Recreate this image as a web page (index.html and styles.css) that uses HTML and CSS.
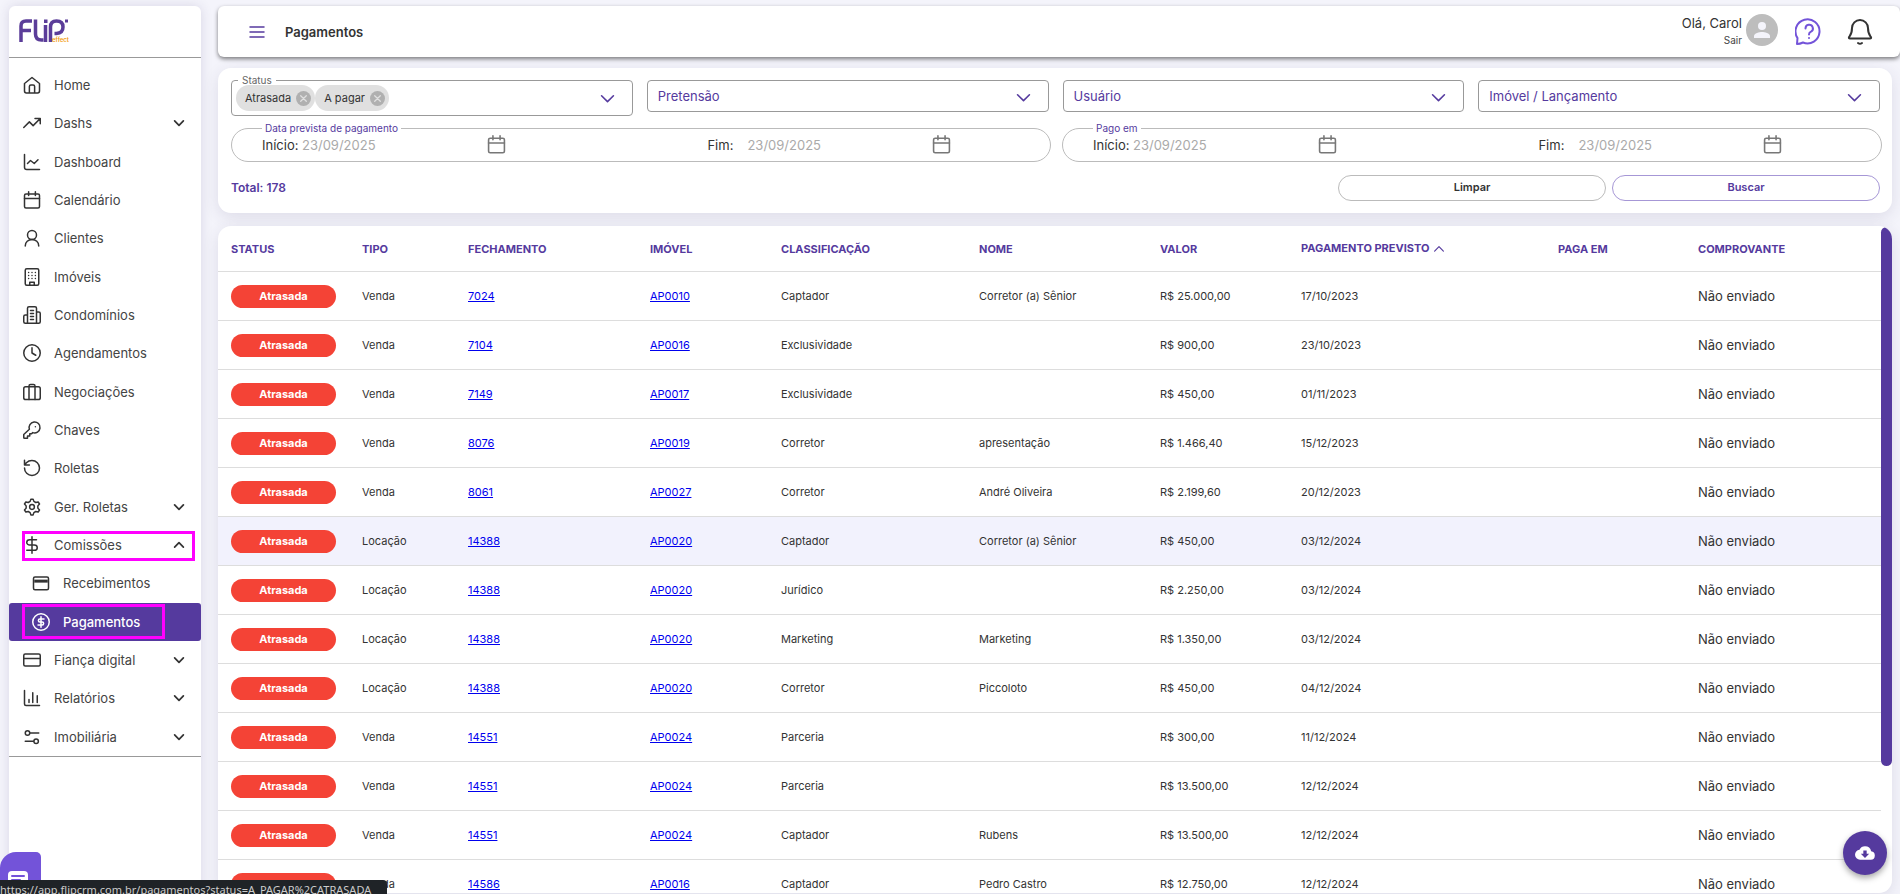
FILE: index.html
```html
<!DOCTYPE html>
<html lang="pt-BR">
<head>
    <meta charset="UTF-8">
    <meta name="viewport" content="width=device-width, initial-scale=1.0">
    <title>Pagamentos</title>
    <link rel="stylesheet" href="styles.css">
</head>
<body>

    <!-- Shared icons -->
    <svg class="sprite" aria-hidden="true">
        <symbol id="down" viewBox="0 0 24 24"><path d="M4.500 8.500l7.500 7.500 7.500-7.500"/></symbol>
        <symbol id="cal" viewBox="0 0 24 24"><rect x="2" y="4" width="20" height="18.500" rx="2"/><path d="M2 10h20M7.500 1v5M16.500 1v5"/></symbol>
        <symbol id="chipx" viewBox="0 0 24 24"><circle class="chip-disc" cx="12" cy="12" r="12"/><path d="M7.500 7.500l9 9M16.500 7.500l-9 9"/></symbol>
    </svg>

    <div class="app">

        <!-- Sidebar -->
        <aside class="sidebar">
            <a href="#" class="logo" aria-label="Flip effect">
                <svg width="50" height="26" viewBox="0 0 50 26">
                    <g fill="none" stroke="#5b3d99" stroke-width="3.500">
                        <path d="M2 24V8q0-5 5-5h6M2 12.500h10"/>
                        <path d="M16.500 1.500V16q0 6 6 6h2"/>
                        <path d="M26.500 7v17"/>
                        <path d="M31.500 24V9q0-6 6-6 6.500 0 6.500 6t-6.500 6.500h-2"/>
                    </g>
                    <path d="M25 1.500h3.500v3.500H25zM46 1.500h3v3h-3z" fill="#5b3d99"/>
                    <text x="33" y="24" class="logo-sub">effect</text>
                </svg>
            </a>
            <nav>
                <ul class="menu">
                    <li><a href="#"><svg class="ico" viewBox="0 0 24 24"><path d="M2 10l10-8 10 8v10a2.500 2.500 0 0 1-2.500 2.500h-15A2.500 2.500 0 0 1 2 20zM8.500 22v-8a2 2 0 0 1 2-2h3a2 2 0 0 1 2 2v8"/></svg>Home</a></li>
                    <li><a href="#"><svg class="ico" viewBox="0 0 24 24"><path d="M1 18l7.500-7.500 5 5L23 6M16 6h7v7"/></svg>Dashs<svg class="arrow"><use href="#down"/></svg></a></li>
                    <li><a href="#"><svg class="ico" viewBox="0 0 24 24"><path d="M2 2v17a3 3 0 0 0 3 3h17M6 14l4-4 5 4 5-5"/></svg>Dashboard</a></li>
                    <li><a href="#"><svg class="ico"><use href="#cal"/></svg>Calendário</a></li>
                    <li><a href="#"><svg class="ico" viewBox="0 0 24 24"><circle cx="12" cy="8" r="6"/><path d="M3 22.500c0-5 4-8.500 9-8.500s9 3.500 9 8.500"/></svg>Clientes</a></li>
                    <li><a href="#"><svg class="ico" viewBox="0 0 24 24"><rect x="3" y="1" width="18" height="22" rx="2"/><path d="M9 23v-4h6v4M7.500 6h.010M12 6h.010M16.500 6h.010M7.500 10h.010M12 10h.010M16.500 10h.010M7.500 14h.010M12 14h.010M16.500 14h.010"/></svg>Imóveis</a></li>
                    <li><a href="#"><svg class="ico" viewBox="0 0 24 24"><path d="M6 23V3a2 2 0 0 1 2-2h8a2 2 0 0 1 2 2v20zM6 12H3a2 2 0 0 0-2 2v7a2 2 0 0 0 2 2h3M18 8h3a2 2 0 0 1 2 2v11a2 2 0 0 1-2 2h-3M10 6h4M10 10h4M10 14h4M10 18h4"/></svg>Condomínios</a></li>
                    <li><a href="#"><svg class="ico" viewBox="0 0 24 24"><circle cx="12" cy="12" r="11"/><path d="M12 5v7l5 3"/></svg>Agendamentos</a></li>
                    <li><a href="#"><svg class="ico" viewBox="0 0 24 24"><rect x="1" y="5" width="22" height="17" rx="2.500"/><path d="M8 22V4a2 2 0 0 1 2-2h4a2 2 0 0 1 2 2v18"/></svg>Negociações</a></li>
                    <li><a href="#"><svg class="ico" viewBox="0 0 24 24"><path d="M1 18v4a1 1 0 0 0 1 1h4v-3h3v-3h2.500l1.500-1.500a7.300 7.300 0 1 0-4.500-4.500z"/><path d="M16.500 7.500h.010"/></svg>Chaves</a></li>
                    <li><a href="#"><svg class="ico" viewBox="0 0 24 24"><path d="M2 12a10 10 0 1 0 10-10 10.500 10.500 0 0 0-7.500 3L2 8M2 1.500V8h6.500"/></svg>Roletas</a></li>
                    <li><a href="#"><svg class="ico" viewBox="0 0 24 24"><path d="M9.500 4.500L10.500 1.500h3l1 3 2.500 1.500 3.200-.7 1.800 2.700-2.200 2.500v3l2.200 2.500-1.800 2.700-3.200-.7-2.500 1.500-1 3h-3l-1-3L7 18l-3.200.7L2 16l2.200-2.500v-3L2 8l1.800-2.700L7 6z"/><circle cx="12" cy="12" r="3.200"/></svg>Ger. Roletas<svg class="arrow"><use href="#down"/></svg></a></li>
                    <li class="marked"><a href="#"><svg class="ico" viewBox="0 0 24 24"><path d="M12 1v22M18 5H9a4 3.500 0 0 0 0 7h6a4 3.500 0 0 1 0 7H5"/></svg>Comissões<svg class="arrow up"><use href="#down"/></svg></a></li>
                    <li class="sub"><a href="#"><svg class="ico" viewBox="0 0 24 24"><rect x="2" y="4" width="20" height="17" rx="2"/><path d="M3 9.500h18" stroke-width="4" stroke-linecap="butt"/></svg>Recebimentos</a></li>
                    <li class="sub active marked"><a href="#" aria-current="page"><svg class="ico" viewBox="0 0 24 24"><circle cx="12" cy="12" r="11"/><path d="M12 5v14M16 8h-5.500a2 2 0 0 0 0 4h3a2 2 0 0 1 0 4H8"/></svg>Pagamentos</a></li>
                    <li><a href="#"><svg class="ico" viewBox="0 0 24 24"><rect x="1" y="4" width="22" height="16" rx="2"/><path d="M1 10h22"/></svg>Fiança digital<svg class="arrow"><use href="#down"/></svg></a></li>
                    <li><a href="#"><svg class="ico" viewBox="0 0 24 24"><path d="M2 2v18a2 2 0 0 0 2 2h18M8 18v-4M13 18V5M19 18V9"/></svg>Relatórios<svg class="arrow"><use href="#down"/></svg></a></li>
                    <li><a href="#"><svg class="ico" viewBox="0 0 24 24"><circle cx="6" cy="6.500" r="3"/><path d="M9 6.500h12M3 17.500h11"/><circle cx="17.500" cy="17.500" r="3"/></svg>Imobiliária<svg class="arrow"><use href="#down"/></svg></a></li>
                </ul>
            </nav>
        </aside>

        <div class="page">

            <!-- Top bar -->
            <header class="topbar">
                <button class="icon-btn burger" aria-label="Menu">
                    <svg width="16" height="12" viewBox="0 0 16 12"><path d="M1 1h14M1 6h14M1 11h14"/></svg>
                </button>
                <h1>Pagamentos</h1>
                <div class="user">
                    <span>Olá, Carol</span>
                    <a href="#">Sair</a>
                </div>
                <svg class="avatar" viewBox="0 0 32 32"><circle cx="16" cy="16" r="16" fill="#bdbdbd"/><circle cx="16" cy="12" r="4" fill="#f4f4fb"/><path d="M8 24v-2c0-2.700 5.300-4 8-4s8 1.300 8 4v2z" fill="#f4f4fb"/></svg>
                <button class="icon-btn help" aria-label="Ajuda">
                    <svg width="28" height="28" viewBox="0 0 28 28"><path d="M2 26l.500-6A12 12 0 1 1 8 24.500Q5 26 2 26z"/><path d="M10.500 10.500a3.700 3.700 0 1 1 5.500 3.200q-2 1-2 2.800M14 20h.010"/></svg>
                </button>
                <button class="icon-btn bell" aria-label="Notificações">
                    <svg width="28" height="28" viewBox="0 0 28 28"><path d="M6 10a8 8 0 0 1 16 0c0 6 1.500 7 3 9q.500 1.500-1 1.500H4q-1.500 0-1-1.500c1.500-2 3-3 3-9zM12 25q2 1.500 4 0"/></svg>
                </button>
            </header>

            <!-- Filters -->
            <form class="card filters">
                <div class="selects">
                    <fieldset class="multi">
                        <legend>Status</legend>
                        <span class="chip">Atrasada<button type="button" aria-label="Remover Atrasada"><svg><use href="#chipx"/></svg></button></span>
                        <span class="chip">A pagar<button type="button" aria-label="Remover A pagar"><svg><use href="#chipx"/></svg></button></span>
                        <button type="button" class="open" aria-label="Abrir status"><svg><use href="#down"/></svg></button>
                    </fieldset>
                    <div class="select">
                        <select aria-label="Pretensão"><option>Pretensão</option></select>
                        <svg><use href="#down"/></svg>
                    </div>
                    <div class="select">
                        <select aria-label="Usuário"><option>Usuário</option></select>
                        <svg><use href="#down"/></svg>
                    </div>
                    <div class="select">
                        <select aria-label="Imóvel / Lançamento"><option>Imóvel / Lançamento</option></select>
                        <svg><use href="#down"/></svg>
                    </div>
                </div>

                <div class="dates">
                    <fieldset class="range">
                        <legend>Data prevista de pagamento</legend>
                        <div class="date"><label for="prevInicio">Início:</label><input type="text" id="prevInicio" placeholder="23/09/2025"><svg><use href="#cal"/></svg></div>
                        <div class="date"><label for="prevFim">Fim:</label><input type="text" id="prevFim" placeholder="23/09/2025"><svg><use href="#cal"/></svg></div>
                    </fieldset>
                    <fieldset class="range">
                        <legend>Pago em</legend>
                        <div class="date"><label for="pagoInicio">Início:</label><input type="text" id="pagoInicio" placeholder="23/09/2025"><svg><use href="#cal"/></svg></div>
                        <div class="date"><label for="pagoFim">Fim:</label><input type="text" id="pagoFim" placeholder="23/09/2025"><svg><use href="#cal"/></svg></div>
                    </fieldset>
                </div>

                <div class="actions">
                    <strong>Total: 178</strong>
                    <button type="reset">Limpar</button>
                    <button type="button" class="primary">Buscar</button>
                </div>
            </form>

            <!-- Payments table -->
            <section class="card list">
                <div class="table-wrap">
                    <table>
                        <colgroup>
                            <col class="c-status"><col class="c-tipo"><col class="c-fech"><col class="c-imovel"><col class="c-class">
                            <col class="c-nome"><col class="c-valor"><col class="c-prev"><col class="c-paga"><col class="c-comp">
                        </colgroup>
                        <thead>
                            <tr><th>STATUS</th><th>TIPO</th><th>FECHAMENTO</th><th>IMÓVEL</th><th>CLASSIFICAÇÃO</th><th>NOME</th><th>VALOR</th><th>PAGAMENTO PREVISTO <svg><use href="#down"/></svg></th><th>PAGA EM</th><th>COMPROVANTE</th></tr>
                        </thead>
                        <tbody>
                            <tr><td><span class="badge">Atrasada</span></td><td>Venda</td><td><a href="#">7024</a></td><td><a href="#">AP0010</a></td><td>Captador</td><td>Corretor (a) Sênior</td><td>R$ 25.000,00</td><td>17/10/2023</td><td></td><td>Não enviado</td></tr>
                            <tr><td><span class="badge">Atrasada</span></td><td>Venda</td><td><a href="#">7104</a></td><td><a href="#">AP0016</a></td><td>Exclusividade</td><td></td><td>R$ 900,00</td><td>23/10/2023</td><td></td><td>Não enviado</td></tr>
                            <tr><td><span class="badge">Atrasada</span></td><td>Venda</td><td><a href="#">7149</a></td><td><a href="#">AP0017</a></td><td>Exclusividade</td><td></td><td>R$ 450,00</td><td>01/11/2023</td><td></td><td>Não enviado</td></tr>
                            <tr><td><span class="badge">Atrasada</span></td><td>Venda</td><td><a href="#">8076</a></td><td><a href="#">AP0019</a></td><td>Corretor</td><td>apresentação</td><td>R$ 1.466,40</td><td>15/12/2023</td><td></td><td>Não enviado</td></tr>
                            <tr><td><span class="badge">Atrasada</span></td><td>Venda</td><td><a href="#">8061</a></td><td><a href="#">AP0027</a></td><td>Corretor</td><td>André Oliveira</td><td>R$ 2.199,60</td><td>20/12/2023</td><td></td><td>Não enviado</td></tr>
                            <tr class="hovered"><td><span class="badge">Atrasada</span></td><td>Locação</td><td><a href="#">14388</a></td><td><a href="#">AP0020</a></td><td>Captador</td><td>Corretor (a) Sênior</td><td>R$ 450,00</td><td>03/12/2024</td><td></td><td>Não enviado</td></tr>
                            <tr><td><span class="badge">Atrasada</span></td><td>Locação</td><td><a href="#">14388</a></td><td><a href="#">AP0020</a></td><td>Jurídico</td><td></td><td>R$ 2.250,00</td><td>03/12/2024</td><td></td><td>Não enviado</td></tr>
                            <tr><td><span class="badge">Atrasada</span></td><td>Locação</td><td><a href="#">14388</a></td><td><a href="#">AP0020</a></td><td>Marketing</td><td>Marketing</td><td>R$ 1.350,00</td><td>03/12/2024</td><td></td><td>Não enviado</td></tr>
                            <tr><td><span class="badge">Atrasada</span></td><td>Locação</td><td><a href="#">14388</a></td><td><a href="#">AP0020</a></td><td>Corretor</td><td>Piccoloto</td><td>R$ 450,00</td><td>04/12/2024</td><td></td><td>Não enviado</td></tr>
                            <tr><td><span class="badge">Atrasada</span></td><td>Venda</td><td><a href="#">14551</a></td><td><a href="#">AP0024</a></td><td>Parceria</td><td></td><td>R$ 300,00</td><td>11/12/2024</td><td></td><td>Não enviado</td></tr>
                            <tr><td><span class="badge">Atrasada</span></td><td>Venda</td><td><a href="#">14551</a></td><td><a href="#">AP0024</a></td><td>Parceria</td><td></td><td>R$ 13.500,00</td><td>12/12/2024</td><td></td><td>Não enviado</td></tr>
                            <tr><td><span class="badge">Atrasada</span></td><td>Venda</td><td><a href="#">14551</a></td><td><a href="#">AP0024</a></td><td>Captador</td><td>Rubens</td><td>R$ 13.500,00</td><td>12/12/2024</td><td></td><td>Não enviado</td></tr>
                            <tr><td><span class="badge">Atrasada</span></td><td>Venda</td><td><a href="#">14586</a></td><td><a href="#">AP0016</a></td><td>Captador</td><td>Pedro Castro</td><td>R$ 12.750,00</td><td>12/12/2024</td><td></td><td>Não enviado</td></tr>
                        </tbody>
                    </table>
                </div>
                <div class="scroll"><div class="thumb"></div></div>
            </section>
        </div>
    </div>

    <!-- Floating items -->
    <button class="fab" aria-label="Exportar">
        <svg width="20" height="20" viewBox="0 0 24 24"><path fill="#fff" d="M19.350 10.040A7.490 7.490 0 0 0 12 4a7.500 7.500 0 0 0-6.650 4.040A6 6 0 0 0 6 20h13a5 5 0 0 0 .350-9.960zM17 13l-5 5-5-5h3V9h4v4z"/></svg>
    </button>
    <button class="chat" aria-label="Chat">
        <svg width="20" height="22" viewBox="0 0 20 22"><rect class="bubble" width="20" height="20" rx="4"/><path d="M4 5h12M4 9h8"/></svg>
    </button>
    <div class="url-hint">https://app.flipcrm.com.br/pagamentos?status=A_PAGAR%2CATRASADA</div>

</body>
</html>
```

FILE: styles.css
```css
* {
    box-sizing: border-box;
}

body {
    margin: 0;
    font-family: Inter, Roboto, sans-serif;
    font-size: 13px;
    color: #333;
    background-color: #f4f4fb;
    overflow: hidden;
}

button, input, select {
    font-family: inherit;
}

button {
    cursor: pointer;
}

svg {
    fill: none;
    stroke: currentColor;
    stroke-width: 2;
    stroke-linecap: round;
    stroke-linejoin: round;
    flex-shrink: 0;
}

.sprite {
    display: none;
}

.app {
    display: flex;
    gap: 17px;
    height: 100vh;
    padding: 6px 0 0 9px;
}

/* Sidebar */
.sidebar {
    width: 192px;
    flex-shrink: 0;
    background-color: #fff;
    border-radius: 6px 6px 0 0;
    box-shadow: 0 0 12px rgba(60, 50, 100, 0.15);
}

.logo {
    display: flex;
    align-items: center;
    height: 52px;
    padding: 0 10px 2px;
    border-bottom: 1px solid #999;
}

.logo svg {
    stroke: none;
    stroke-linecap: butt;
}

.logo-sub {
    font-size: 6px;
    font-weight: 600;
    fill: #f39c12;
}

.menu {
    display: flex;
    flex-direction: column;
    list-style: none;
    margin: 0;
    height: 699px;
    padding: 8px 0 0;
    border-bottom: 1px solid #999;
}

.menu li {
    position: relative;
    display: flex;
    flex: 1;
}

.menu a {
    display: flex;
    align-items: center;
    flex: 1;
    padding: 0 15px 0 14px;
    color: #444;
    text-decoration: none;
}

.menu .ico {
    width: 18px;
    height: 18px;
    margin-right: 13px;
    color: #333;
    overflow: visible;
}

.menu .arrow {
    width: 14px;
    height: 14px;
    margin-left: auto;
    stroke-width: 3;
    color: #333;
}

.menu .up {
    transform: rotate(180deg);
}

.menu .sub a {
    padding-left: 23px;
}

.menu .active {
    background-color: #553a9e;
    border-radius: 3px;
}

.menu .active a, .menu .active .ico {
    color: #fff;
}

.menu .active a {
    font-weight: 500;
}

.marked::after {
    content: "";
    position: absolute;
    top: 5px;
    left: 13px;
    right: 6px;
    bottom: 3px;
    border: 3px solid #ff00ff;
}

.active.marked::after {
    top: 1px;
    right: 36px;
    bottom: 2px;
}

/* Page */
.page {
    display: flex;
    flex-direction: column;
    flex: 1;
    min-width: 0;
}

.topbar {
    display: flex;
    align-items: center;
    height: 51px;
    flex-shrink: 0;
    padding: 0 26px 0 31px;
    margin-bottom: 11px;
    background-color: #fff;
    border-radius: 6px;
    box-shadow: 0 2px 4px rgba(0, 0, 0, 0.5);
}

.topbar h1 {
    flex: 1;
    margin: 0 0 0 20px;
    font-size: 13px;
    font-weight: 600;
}

.icon-btn {
    display: flex;
    padding: 0;
    border: 0;
    background: none;
}

.burger {
    color: #553a9e;
}

.user {
    display: flex;
    flex-direction: column;
    align-items: flex-end;
    gap: 3px;
    margin: 0 4px 2px 0;
}

.user a {
    font-size: 10px;
    color: #444;
    text-decoration: none;
}

.burger svg {
    stroke-width: 1.5;
}

.avatar {
    width: 32px;
    height: 32px;
    margin-bottom: 4px;
    stroke: none;
}

.help {
    margin-left: 17px;
    color: #7353d9;
}

.bell {
    margin-left: 23px;
    color: #333;
}

.card {
    margin-right: 8px;
    background-color: #fff;
    border-radius: 13px;
    box-shadow: 0 4px 16px rgba(60, 50, 90, 0.12);
}

/* Filters */
.filters {
    flex-shrink: 0;
    padding: 12px 12px 12px 13px;
    margin-bottom: 13px;
}

.selects {
    display: grid;
    grid-template-columns: repeat(4, 1fr);
    gap: 14px;
    align-items: start;
}

.multi {
    display: flex;
    align-items: center;
    min-width: 0;
    height: 42px;
    margin: -6px 0 0;
    padding: 0 10px 5px 4px;
    border: 1px solid #999;
    border-radius: 4px;
}

legend {
    font-size: 10px;
    line-height: 12px;
}

.multi legend {
    margin-left: 2px;
    padding: 0 4px;
    color: #666;
}

.chip {
    display: flex;
    align-items: center;
    gap: 5px;
    height: 26px;
    padding: 0 4px 0 9px;
    font-size: 11px;
    background-color: #e0e0e0;
    border-radius: 13px;
}

.chip button, .open {
    display: flex;
    padding: 0;
    border: 0;
    background: none;
}

.chip svg {
    width: 15px;
    height: 15px;
    color: #e0e0e0;
}

.chip-disc {
    fill: #b0b0b0;
    stroke: none;
}

.open {
    margin-left: auto;
    padding-right: 5px;
    color: #553a9e;
}

.open svg, .select svg {
    width: 19px;
    height: 19px;
}

.select {
    position: relative;
}

.select select {
    width: 100%;
    height: 32px;
    padding: 0 10px;
    font-size: 13px;
    color: #553a9e;
    background-color: #fff;
    border: 1px solid #999;
    border-radius: 4px;
    appearance: none;
}

.select svg {
    position: absolute;
    top: 8px;
    right: 16px;
    color: #553a9e;
    pointer-events: none;
}

.dates {
    display: grid;
    grid-template-columns: 1fr 1fr;
    gap: 11px;
    margin: 6px -2px 0 0;
}

.range {
    display: grid;
    grid-template-columns: 446fr 343fr;
    align-items: center;
    min-width: 0;
    height: 40px;
    margin: 0;
    padding: 0 0 6px 30px;
    border: 1px solid #bbb;
    border-radius: 17px;
}

.range legend {
    padding: 0 3px;
    color: #553a9e;
}

.date {
    display: flex;
    align-items: center;
    width: 244px;
}

.date label {
    width: 40px;
}

.date input {
    flex: 1;
    min-width: 0;
    padding: 0;
    font-size: 13px;
    border: 0;
    background: none;
}

.date input::placeholder {
    color: #aaa;
}

.date svg {
    width: 19px;
    height: 19px;
    color: #777;
}

.actions {
    display: flex;
    align-items: center;
    gap: 6px;
    margin-top: 13px;
}

.actions strong {
    flex: 1;
    padding-bottom: 2px;
    font-size: 12px;
    font-weight: 600;
    color: #553a9e;
}

.actions button {
    width: 268px;
    height: 26px;
    padding: 0 0 2px;
    font-size: 11px;
    font-weight: 600;
    color: #333;
    background-color: #fff;
    border: 1px solid #bbb;
    border-radius: 13px;
}

.actions .primary {
    color: #553a9e;
    border-color: #a697d6;
}

/* Table */
.list {
    display: flex;
    flex: 1;
    min-height: 0;
    margin-bottom: 1px;
    overflow: hidden;
}

.table-wrap {
    flex: 1;
    overflow: hidden;
}

table {
    width: 100%;
    table-layout: fixed;
    border-collapse: separate;
    border-spacing: 0;
}

.c-status { width: 131px; }
.c-tipo { width: 106px; }
.c-fech { width: 182px; }
.c-imovel { width: 131px; }
.c-class { width: 198px; }
.c-nome { width: 181px; }
.c-valor { width: 141px; }
.c-prev { width: 257px; }
.c-paga { width: 140px; }
.c-comp { width: 196px; }

th, td {
    height: 49px;
    padding: 0 13px;
    font-size: 11px;
    text-align: left;
    white-space: nowrap;
    border-bottom: 1px solid #ddd;
}

th {
    height: 46px;
    font-weight: 700;
    color: #553a9e;
}

th svg {
    width: 14px;
    height: 14px;
    vertical-align: middle;
    transform: rotate(180deg);
}

td:last-child {
    font-size: 13px;
}

td a {
    color: #0000ee;
}

.hovered td {
    background-color: #f2f2fd;
}

.badge {
    display: block;
    height: 23px;
    font-weight: 700;
    line-height: 23px;
    text-align: center;
    color: #fff;
    background-color: #f44336;
    border-radius: 12px;
}

.scroll {
    width: 11px;
    padding-top: 1px;
}

.thumb {
    height: 81%;
    background-color: #553a9e;
    border-radius: 6px;
}

/* Floating items */
.fab {
    position: fixed;
    right: 13px;
    bottom: 19px;
    display: flex;
    align-items: center;
    justify-content: center;
    width: 44px;
    height: 44px;
    border: 0;
    border-radius: 50%;
    background-color: #553a9e;
    box-shadow: 0 3px 6px rgba(0, 0, 0, 0.35);
}

.fab svg {
    stroke: none;
}

.chat {
    position: fixed;
    left: 0;
    bottom: 0;
    width: 41px;
    height: 42px;
    padding: 18px 0 0 8px;
    border: 0;
    border-radius: 16px 5px 0 0;
    background-color: #7353d9;
}

.chat svg {
    display: block;
    color: #7353d9;
}

.bubble {
    fill: #fff;
    stroke: none;
}

.url-hint {
    position: fixed;
    left: 0;
    bottom: 0;
    height: 14px;
    padding-right: 16px;
    overflow: hidden;
    font-family: "Noto Sans", sans-serif;
    font-size: 11px;
    line-height: 20px;
    color: #ccc;
    background-color: #1f2327;
    border-radius: 0 4px 0 0;
}
```
